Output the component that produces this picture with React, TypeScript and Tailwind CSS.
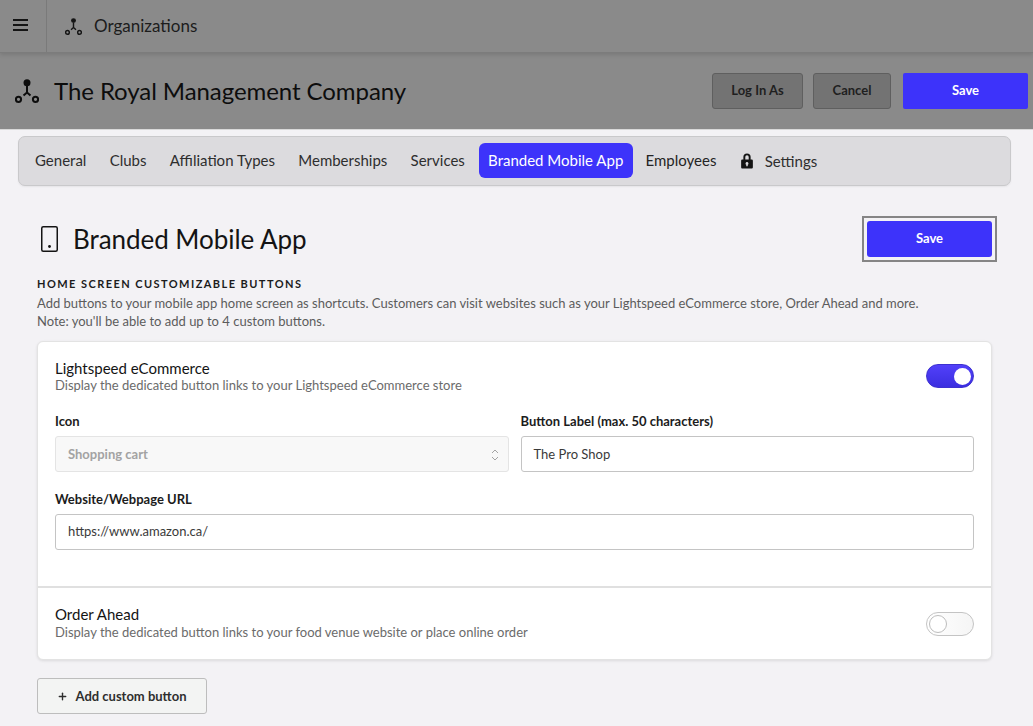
import { Plus } from "lucide-react";

function OrgIcon({ className }: { className: string }) {
  return (
    <svg className={className} viewBox="0 0 24 24" fill="none" stroke="currentColor">
      <circle cx="12" cy="3.700" r="3.500" fill="currentColor" stroke="none" />
      <path strokeWidth={2} d="M12 7v6.500M12 13.500L8.500 16.500M12 13.500l3.500 3" />
      <circle cx="3.500" cy="20.300" r="2.600" strokeWidth={2} />
      <circle cx="20.500" cy="20.300" r="2.600" strokeWidth={2} />
    </svg>
  );
}

function LockIcon() {
  return (
    <svg className="w-[14px] h-[16px] text-[#141414]" viewBox="0 0 13 15" fill="currentColor">
      <path fillRule="evenodd" d="M3.100 6V3.800a3.400 3.400 0 0 1 6.800 0V6h.9c.7 0 1.200.5 1.200 1.200v6.100c0 .7-.5 1.200-1.200 1.200H2.200c-.7 0-1.200-.5-1.200-1.200V7.200C1 6.500 1.500 6 2.200 6h.9Zm1.800 0h3.200V3.800a1.600 1.600 0 0 0-3.200 0V6Zm1.600 2.500a1.400 1.400 0 0 0-.7 2.600v1.300h1.400v-1.300a1.400 1.400 0 0 0-.7-2.600Z" />
    </svg>
  );
}

function PhoneIcon() {
  return (
    <svg className="ml-[4px] w-[17px] h-[26px] text-[#141414]" viewBox="0 0 17 26" fill="none" stroke="currentColor">
      <rect x="0.750" y="0.750" width="15.500" height="24.500" rx="1.500" strokeWidth={1.500} />
      <circle cx="8.500" cy="20.500" r="1.400" fill="currentColor" stroke="none" />
    </svg>
  );
}

function Toggle({ on }: { on: boolean }) {
  if (on) {
    return (
      <div className="w-12 h-6 rounded-full bg-gradient-to-b from-[#5240fa] to-[#3b2ee0] border border-[#3d31d0] flex items-center justify-end pr-[2px]">
        <div className="w-[17px] h-[17px] rounded-full bg-white" />
      </div>
    );
  }
  return (
    <div className="w-12 h-6 rounded-full bg-gradient-to-r from-white to-[#f5f5f5] border border-[#c4c4c4] flex items-center pl-[2px]">
      <div className="w-[18px] h-[18px] rounded-full bg-white border border-[#bdbdbd]" />
    </div>
  );
}

const tabs = ["General", "Clubs", "Affiliation Types", "Memberships", "Services"];

export default function App() {
  return (
    <div className="h-[726px] overflow-hidden bg-[#f3f2f5] text-[#141414] font-['Lato',sans-serif]">
      <div className="h-[130px] bg-[#8a8a8a] border-b border-[#d9d9d9]">
        <div className="h-[53px] flex border-b border-[#7c7c7c] shadow-[0_2px_4px_rgba(0,0,0,0.12)]">
          <div className="w-[47px] border-r border-[#7a7a7a] flex items-center pl-[13px] pb-[2px]">
            <div className="w-[15px] space-y-[3px]">
              <div className="h-[2px] bg-[#141414]" />
              <div className="h-[2px] bg-[#141414]" />
              <div className="h-[2px] bg-[#141414]" />
            </div>
          </div>
          <div className="flex items-center pl-[18px] gap-[12px] text-[17px] text-[#1c1c1c]">
            <OrgIcon className="w-[17px] h-[17px] text-[#141414]" />
            Organizations
          </div>
        </div>
        <div className="h-[76px] flex items-center pl-[15px] pr-[5px]">
          <OrgIcon className="w-[24px] h-[24px] text-[#0d0d0d]" />
          <div className="ml-[15px] text-[24px] tracking-[-0.07px] text-[#0d0d0d]">The Royal Management Company</div>
          <div className="ml-auto flex items-center">
            <button className="w-[91px] h-[36px] rounded-[3px] border border-[#5f5f5f] bg-[#737373] text-[13px] font-bold text-[#1f1f1f]">Log In As</button>
            <button className="ml-[10px] w-[78px] h-[36px] rounded-[3px] border border-[#5f5f5f] bg-[#737373] text-[13px] font-bold text-[#1f1f1f]">Cancel</button>
            <button className="ml-[12px] w-[125px] h-[36px] rounded-[2px] bg-[#3d33fa] text-[13px] font-bold text-white">Save</button>
          </div>
        </div>
      </div>

      <div className="ml-[18px] mr-[22px] mt-[6px] h-[50px] pb-[2px] rounded-[7px] bg-[#dcdbde] border border-[#c9c9cb] shadow-[0_1px_2px_rgba(0,0,0,0.06)] flex items-center px-[7px] gap-[5.25px] text-[15px] text-[#2e2e2e]">
        {tabs.map((t) => (
          <div key={t} className="px-[9px]">{t}</div>
        ))}
        <div className="h-[35px] flex items-center pl-[9px] pr-[10px] rounded-[6px] bg-[#3d33fa] text-white">Branded Mobile App</div>
        <div className="pl-[7px] pr-[8px] text-[#242424]">Employees</div>
        <div className="pl-[10px] mt-[2px] flex items-center gap-[11px]">
          <LockIcon />
          Settings
        </div>
      </div>

      <div className="ml-[37px] mr-[41px]">
        <div className="mt-[30px] flex items-center h-[46px]">
          <PhoneIcon />
          <h1 className="ml-[15px] text-[26px] tracking-[-0.05px]">Branded Mobile App</h1>
          <div className="ml-auto p-[3px] border-2 border-[#858585] -mr-[5px]">
            <button className="block w-[125px] h-[36px] rounded-[3px] bg-[#3d33fa] text-[13px] font-bold text-white">Save</button>
          </div>
        </div>
        <div className="mt-[14px] text-[11px] leading-[16px] font-bold tracking-[1.44px] uppercase text-[#1c1c1c]">Home screen customizable buttons</div>
        <p className="mt-[2px] text-[13px] leading-[18px] text-[#5c5c5c]">
          Add buttons to your mobile app home screen as shortcuts. Customers can visit websites such as your Lightspeed eCommerce store, Order Ahead and more.
          <br />
          Note: you'll be able to add up to 4 custom buttons.
        </p>

        <div className="mt-[11px] w-[955px] bg-white rounded-[6px] border border-[#e3e3e3] shadow-[0_1px_3px_rgba(0,0,0,0.1)]">
          <div className="px-[17px] pt-[17px] pb-[36px] border-b-2 border-[#e0e0e0]">
            <div className="flex items-start justify-between">
              <div>
                <div className="text-[15px] leading-[18px] text-[#141414]">Lightspeed eCommerce</div>
                <div className="text-[13px] leading-[16px] text-[#6b6b6b]">Display the dedicated button links to your Lightspeed eCommerce store</div>
              </div>
              <div className="mt-[5px]"><Toggle on /></div>
            </div>
            <div className="mt-[20px] grid grid-cols-2 gap-[12px]">
              <div>
                <div className="text-[13px] leading-[16px] font-bold text-[#1c1c1c]">Icon</div>
                <div className="mt-[7px] h-[36px] pt-[1px] rounded-[3px] border border-[#e4e4e4] bg-[#f8f8f8] flex items-center justify-between pl-[12px] pr-[9px] text-[13px] font-bold text-[#a3a3a3]">
                  Shopping cart
                  <svg className="w-[8px] h-[14px] text-[#a3a3a3]" viewBox="0 0 8 14" fill="none" stroke="currentColor" strokeWidth={1}>
                    <path d="M1 5l3-3 3 3M1 9l3 3 3-3" />
                  </svg>
                </div>
              </div>
              <div>
                <div className="text-[13px] leading-[16px] font-bold text-[#1c1c1c]">Button Label (max. 50 characters)</div>
                <div className="mt-[7px] h-[36px] pt-[1px] rounded-[3px] border border-[#c4c4c4] flex items-center px-[12px] text-[13px] text-[#3a3a3a]">The Pro Shop</div>
              </div>
            </div>
            <div className="mt-[19px] text-[13px] leading-[16px] font-bold text-[#1c1c1c]">Website/Webpage URL</div>
            <div className="mt-[7px] h-[36px] rounded-[3px] border border-[#c4c4c4] flex items-center px-[12px] text-[13px] text-[#3a3a3a]">https://www.amazon.ca/</div>
          </div>
          <div className="px-[17px] h-[71px] flex items-center justify-between">
            <div className="pb-[1px]">
              <div className="text-[15px] leading-[17px] text-[#141414]">Order Ahead</div>
              <div className="text-[13px] leading-[18px] text-[#6b6b6b]">Display the dedicated button links to your food venue website or place online order</div>
            </div>
            <Toggle on={false} />
          </div>
        </div>

        <button className="mt-[18px] w-[170px] h-[36px] pt-[1px] rounded-[3px] border border-[#bdbdbd] bg-[#f3f4f3] flex items-center justify-center gap-[7px] text-[13px] font-bold text-[#2e2e2e]">
          <Plus className="w-[11px] h-[11px]" strokeWidth={3} />
          Add custom button
        </button>
      </div>
    </div>
  );
}
